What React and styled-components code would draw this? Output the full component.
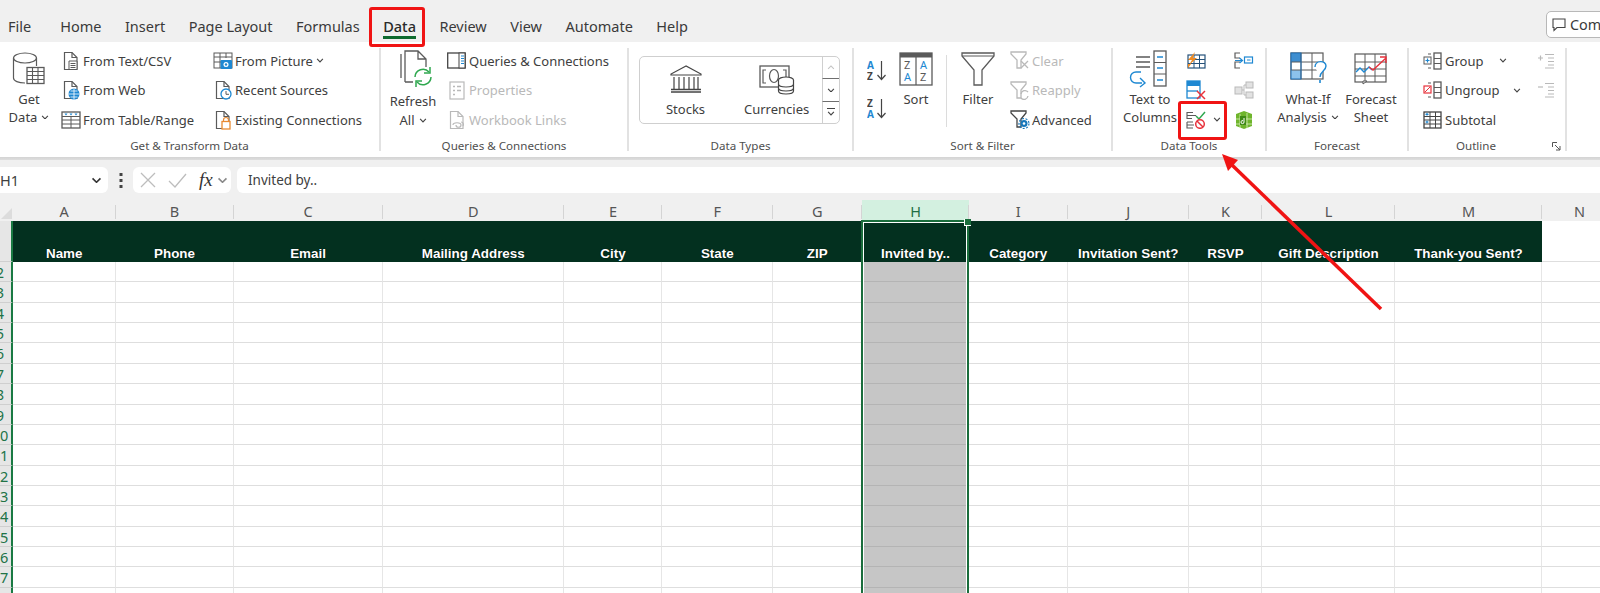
import React from 'react';
import styled, { createGlobalStyle } from 'styled-components';

const GRAY = '#5a5a5a';
const FADED = '#b9b9b9';
const BLUE = '#1e88d2';
const RED = '#e8323c';
const GREEN = '#2fa84f';

const Global = createGlobalStyle`
  html, body { margin: 0; padding: 0; height: 593px; overflow: hidden; background: #fff; }
  body { font-family: "Noto Sans", "Liberation Sans", sans-serif; color: #404040; }
`;

const Page = styled.div`
  position: relative;
  width: 1600px;
  height: 593px;
  overflow: hidden;
`;

/* tabs */
const TabBar = styled.div`
  height: 42px;
  background: #f0f0f0;
  display: flex;
  align-items: center;
  padding: 0 0 0 8px;
  gap: 23.5px;
  font-size: 14.5px;
  color: #3a3a3a;
`;
const Tab = styled.div`
  position: relative;
  line-height: 20px;
  margin-top: 9px;
  margin-right: ${p => p.$mr || 0}px;
  font-weight: ${p => (p.$active ? 500 : 400)};
  color: ${p => (p.$active ? '#2a2a2a' : '#3a3a3a')};
  ${p => p.$active && `
    &:after {
      content: '';
      position: absolute;
      left: 0; right: 0; bottom: -3px;
      height: 2.5px;
      background: #0e6b2e;
    }
  `}
`;
const CommentButton = styled.div`
  margin-left: auto;
  margin-right: -16px;
  margin-top: 7px;
  width: 70px;
  height: 27px;
  border: 1px solid #b8b8b8;
  border-radius: 5px;
  background: #fff;
  display: flex;
  align-items: center;
  gap: 4px;
  padding-left: 5px;
  font-size: 14.4px;
  box-sizing: border-box;
`;

/* ribbon */
const Ribbon = styled.div`
  height: 115px;
  background: #fff;
  padding-top: 6px;
  box-sizing: border-box;
  display: flex;
  align-items: flex-start;
`;
const Group = styled.div`
  width: ${p => p.$w}px;
  height: 103px;
  box-sizing: border-box;
  border-right: 2px solid #e2e2e2;
  display: flex;
  flex-direction: column;
`;
const GroupBody = styled.div`
  flex: 1;
  display: flex;
  padding-left: ${p => p.$pad || 0}px;
  gap: ${p => p.$gap || 0}px;
`;
const GroupLabel = styled.div`
  position: relative;
  height: 10px;
  line-height: 10px;
  font-size: 11.6px;
  color: #4f4f4f;
  text-align: center;
  padding-right: ${p => p.$pr || 0}px;
`;
const Launcher = styled.div`
  position: absolute;
  right: 4px;
  top: 1px;
  width: 9px;
  height: 9px;
  display: flex;
`;
const BigButton = styled.div`
  width: ${p => p.$w}px;
  flex: none;
  display: flex;
  flex-direction: column;
  align-items: center;
  font-size: 13px;
  line-height: ${p => p.$lh || 18}px;
  color: #404040;
`;
const BigIcon = styled.div`
  height: 42px;
  display: flex;
  align-items: center;
  justify-content: center;
  margin-bottom: ${p => p.$mb || 0}px;
  margin-left: ${p => p.$ml || 0}px;
`;
const ButtonLine = styled.div`
  display: flex;
  align-items: center;
  gap: 4px;
  white-space: nowrap;
`;
const SmallColumn = styled.div`
  width: ${p => (p.$w ? p.$w + 'px' : 'auto')};
  flex: none;
  margin-top: -2px;
  margin-left: ${p => p.$ml || 0}px;
`;
const SmallButton = styled.div`
  height: 29.5px;
  display: flex;
  align-items: center;
  gap: 2px;
  font-size: 13px;
  white-space: nowrap;
  color: ${p => (p.$off ? FADED : '#404040')};
`;
const IconSlot = styled.div`
  width: 21px;
  flex: none;
  display: flex;
  justify-content: center;
`;
const SortColumn = styled.div`
  width: 19px;
  flex: none;
  padding-top: 12px;
  display: flex;
  flex-direction: column;
  gap: 17px;
`;
const VSep = styled.div`
  width: 1px;
  height: 72px;
  margin-top: 7px;
  background: #dcdcdc;
  flex: none;
`;
const Gallery = styled.div`
  margin: 8px 0 0 10px;
  width: 201px;
  height: 68px;
  box-sizing: border-box;
  border: 1px solid #cfcfcf;
  border-radius: 5px;
  display: flex;
`;
const GalleryItem = styled.div`
  width: 91.5px;
  display: flex;
  flex-direction: column;
  align-items: center;
  font-size: 13px;
  line-height: 18px;
  padding-top: 8px;
  box-sizing: border-box;
  gap: 3px;
`;
const GalleryIcon = styled.div`
  height: 32px;
  display: flex;
  align-items: flex-start;
`;
const GalleryScroll = styled.div`
  margin-left: auto;
  width: 17px;
  display: flex;
  flex-direction: column;
`;
const ScrollStep = styled.div`
  flex: 1;
  display: flex;
  flex-direction: column;
  gap: 2px;
  align-items: center;
  justify-content: center;
  border-left: 1px solid #cfcfcf;
  border-top: ${p => (p.$first ? 'none' : '1px solid #6f6f6f')};
`;
const UpChev = styled.span`
  display: flex;
  transform: rotate(180deg);
`;
const MoreBar = styled.span`
  width: 8px;
  height: 1px;
  background: #444;
`;
const RibbonEdge = styled.div`
  height: 3px;
  background: linear-gradient(#d3d3d3, #dedede);
`;

/* formula bar */
const FormulaBar = styled.div`
  height: 40px;
  background: #f0f0f0;
  display: flex;
  align-items: center;
  box-sizing: border-box;
`;
const NameBox = styled.div`
  width: 108px;
  height: 26px;
  flex: none;
  background: #fff;
  border-radius: 0 6px 6px 0;
  display: flex;
  align-items: center;
  justify-content: space-between;
  padding-right: 6px;
  box-sizing: border-box;
  font-size: 14.5px;
`;
const Kebab = styled.div`
  width: 25px;
  flex: none;
  display: flex;
  justify-content: center;
`;
const FxBox = styled.div`
  width: 98px;
  height: 26px;
  flex: none;
  background: #fff;
  border-radius: 6px;
  display: flex;
  align-items: center;
  gap: 12px;
  padding-left: 7px;
  box-sizing: border-box;
`;
const FxText = styled.span`
  font-family: "Liberation Serif", serif;
  font-style: italic;
  font-size: 19px;
  color: #333;
  margin-right: -8px;
`;
const FormulaInput = styled.div`
  flex: 1;
  height: 26px;
  margin-left: 6px;
  background: #fff;
  border-radius: 6px 0 0 6px;
  padding-left: 11px;
  font-size: 13.5px;
  line-height: 26px;
`;

/* sheet */
const COLS = [
  { id: 'A', w: 102.5, title: 'Name' },
  { id: 'B', w: 118, title: 'Phone' },
  { id: 'C', w: 149, title: 'Email' },
  { id: 'D', w: 181.5, title: 'Mailing Address' },
  { id: 'E', w: 98, title: 'City' },
  { id: 'F', w: 110.5, title: 'State' },
  { id: 'G', w: 89.5, title: 'ZIP' },
  { id: 'H', w: 107, title: 'Invited by..' },
  { id: 'I', w: 98.5, title: 'Category' },
  { id: 'J', w: 121.5, title: 'Invitation Sent?' },
  { id: 'K', w: 73, title: 'RSVP' },
  { id: 'L', w: 133, title: 'Gift Description' },
  { id: 'M', w: 147, title: 'Thank-you Sent?' },
  { id: 'N', w: 75 },
];
const ROWS = [2, 3, 4, 5, 6, 7, 8, 9, 10, 11, 12, 13, 14, 15, 16, 17, 18];

const Sheet = styled.div`
  position: relative;
  display: grid;
  grid-template-columns: 13px ${COLS.map(c => c.w + 'px').join(' ')};
  grid-template-rows: 21px 41px repeat(${ROWS.length}, 20.37px);
`;
const Corner = styled.div`
  background: #f0f0f0;
  position: relative;
  &:after {
    content: '';
    position: absolute;
    right: 1px;
    bottom: 2px;
    border-style: solid;
    border-width: 0 0 11px 11px;
    border-color: transparent transparent #dcdcdc transparent;
  }
`;
const ColHead = styled.div`
  background: ${p => (p.$sel ? '#d3f0e0' : '#f0f0f0')};
  color: ${p => (p.$sel ? '#1f6e43' : '#555')};
  font-size: 14.5px;
  line-height: 23px;
  text-align: center;
  position: relative;
  &:after {
    content: '';
    position: absolute;
    right: 0;
    top: 5px;
    bottom: 2px;
    width: 1px;
    background: #d4d4d4;
  }
`;
const RowHead = styled.div`
  background: #e6e6e6;
  border-right: 2px solid #1a7a43;
  border-bottom: 1px solid #cfcfcf;
  box-sizing: border-box;
  overflow: hidden;
`;
const RowNumber = styled.span`
  display: block;
  width: 40px;
  margin-left: -20px;
  text-align: center;
  color: #217346;
  font-size: 14.5px;
  line-height: 20px;
`;
const TitleCell = styled.div`
  background: #03301f;
  color: #fff;
  font-family: "Liberation Sans", sans-serif;
  font-weight: 700;
  font-size: 13.4px;
  line-height: 16px;
  white-space: nowrap;
  display: flex;
  align-items: flex-end;
  justify-content: center;
  text-shadow: 0 0 1px #000;
`;
const Cell = styled.div`
  box-sizing: border-box;
  border-bottom: 1px solid ${p => (p.$sel ? '#b4b4b4' : '#dedede')};
  border-right: 1px solid ${p => (p.$sel ? '#c6c6c6' : '#e6e6e6')};
  background: ${p => (p.$sel ? '#c6c6c6' : '#fff')};
`;
const Selection = styled.div`
  position: absolute;
  left: 861px;
  top: 20px;
  bottom: 0;
  width: 108px;
  border: 2px solid #1a6d3c;
  outline: 1px solid #fff;
  outline-offset: -3px;
  box-sizing: border-box;
  &:after {
    content: '';
    position: absolute;
    right: -4px;
    top: -3px;
    width: 6px;
    height: 6px;
    background: #1a6d3c;
    border: 1px solid #fff;
    border-width: 0 0 1px 1px;
  }
`;

/* annotations */
const RedBox = styled.div`
  position: absolute;
  box-sizing: border-box;
  border: 3.5px solid #f01414;
  border-radius: 3px;
`;
const DataTabBox = styled(RedBox)`
  left: 369px;
  top: 6.5px;
  width: 56px;
  height: 40.5px;
`;
const ValidationBox = styled(RedBox)`
  left: 1178px;
  top: 101px;
  width: 49px;
  height: 39px;
`;
const ArrowLayer = styled.svg`
  position: absolute;
  left: 0;
  top: 0;
  pointer-events: none;
`;

const Glyph = styled.svg`
  display: block;
  flex: none;
`;

const Chev = ({ c = '#444', w = 8 }) => (
  <Glyph width={w} height={w * 0.6} viewBox="0 0 8 5" fill="none">
    <path d="M1 1l3 3 3-3" stroke={c} strokeWidth="1.2" />
  </Glyph>
);

const Sheet16 = ({ children, c = GRAY, off }) => (
  <Glyph width="20" height="20" viewBox="0 0 20 20" fill="none">
    <path d="M3.500 18.500V1.500H11l5 5V18.500z" stroke={off ? FADED : c} strokeWidth="1.2" fill="#fff" />
    <path d="M11 1.500V6.500H16" stroke={off ? FADED : c} strokeWidth="1.2" />
    {children}
  </Glyph>
);

const GetDataIcon = () => (
  <Glyph width="34" height="36" viewBox="0 0 34 36" fill="none">
    <ellipse cx="13" cy="7" rx="11.5" ry="5" fill="#fff" stroke={GRAY} strokeWidth="1.2" />
    <path d="M1.500 7v20c0 3 5 5 11.500 5" stroke={GRAY} strokeWidth="1.2" />
    <path d="M24.500 7v8" stroke={GRAY} strokeWidth="1.2" />
    <rect x="15" y="16.500" width="17" height="16" fill="#fff" stroke={GRAY} strokeWidth="1.3" />
    <path d="M15 20.500h17M15 24.500h17M15 28.500h17M20.500 16.500v16M26 16.500v16" stroke={GRAY} strokeWidth="1.1" />
  </Glyph>
);
const FromTextIcon = () => (
  <Sheet16>
    <path d="M8 10h8v8.500H8z" fill="#fff" stroke={GRAY} />
    <path d="M9.500 12.500h5M9.500 14.500h5M9.500 16.500h5" stroke={GRAY} />
  </Sheet16>
);
const FromWebIcon = () => (
  <Sheet16>
    <circle cx="13" cy="14" r="5.500" fill={BLUE} />
    <path d="M7.500 14h11M13 8.500v11M9.500 11h7M9.500 17h7" stroke="#fff" strokeWidth=".8" />
  </Sheet16>
);
const FromTableIcon = () => (
  <Glyph width="20" height="18" viewBox="0 0 20 18" fill="none">
    <rect x="1" y="1" width="18" height="16" fill="#fff" stroke={GRAY} strokeWidth="1.3" />
    <path d="M1 5.500h18M1 9h18M1 13h18M10 5.500V17" stroke={GRAY} />
    <path d="M3.500 2.500l1.500 2 1.500-2zM8.500 2.500l1.500 2 1.500-2zM13.500 2.500l1.500 2 1.500-2z" fill={BLUE} />
  </Glyph>
);
const FromPictureIcon = () => (
  <Glyph width="20" height="18" viewBox="0 0 20 18" fill="none">
    <rect x="1" y="1" width="18" height="15" fill="#fff" stroke={GRAY} />
    <path d="M1 5h18M1 10h8M7 1v15M13 1v5" stroke={GRAY} />
    <rect x="7.500" y="8" width="11.500" height="9" rx="1" fill={BLUE} />
    <circle cx="13" cy="12.500" r="2.500" fill="#fff" />
    <circle cx="13" cy="12.500" r="1.200" fill={BLUE} />
  </Glyph>
);
const RecentIcon = () => (
  <Sheet16>
    <circle cx="13" cy="14" r="5" fill="#fff" stroke={BLUE} strokeWidth="1.300" />
    <path d="M13 11v3.300h3" stroke={GRAY} />
  </Sheet16>
);
const ExistingIcon = () => (
  <Sheet16>
    <path d="M10.500 12V10a2.500 2.500 0 0 1 5 0v2" stroke="#e98a32" strokeWidth="1.200" />
    <rect x="9" y="11.500" width="8" height="7.500" fill="#fff" stroke="#e98a32" strokeWidth="1.300" />
  </Sheet16>
);
const RefreshIcon = () => (
  <Glyph width="34" height="38" viewBox="0 0 34 38" fill="none">
    <path d="M1 4v24" stroke={GRAY} strokeWidth="1.300" />
    <path d="M5 32V1h13l8 8v8M18 1v8h8M5 32h8" stroke={GRAY} strokeWidth="1.300" fill="#fff" />
    <path d="M15 27a8 8 0 0 1 14-5M31 27a8 8 0 0 1-14 5" stroke={GREEN} strokeWidth="1.500" />
    <path d="M30 17v6h-6M16 37v-6h6" stroke={GREEN} strokeWidth="1.500" />
  </Glyph>
);
const QueriesIcon = () => (
  <Glyph width="19" height="17" viewBox="0 0 19 17" fill="none">
    <rect x=".7" y="1" width="17.500" height="15" fill="#fff" stroke="#444" strokeWidth="1.300" />
    <rect x="12" y="1" width="6" height="15" fill="#fff" stroke="#444" strokeWidth="1" />
    <path d="M14 4h3M14 6.500h3M14 9h3M14 11.500h3" stroke={BLUE} strokeWidth="1.200" />
  </Glyph>
);
const PropertiesIcon = () => (
  <Glyph width="16" height="19" viewBox="0 0 16 19" fill="none">
    <rect x="1" y="1" width="14" height="17" stroke={FADED} strokeWidth="1.200" />
    <path d="M4 5.500h2M4 9.500h2M4 13.500h2M8 5.500h4M8 9.500h4" stroke={FADED} strokeWidth="1.500" />
  </Glyph>
);
const LinksIcon = () => (
  <Sheet16 off>
    <path d="M6 15c0-3 8-3 8 0s-5 3-5 0M14 12c2 0 3 2 2 4" stroke={FADED} strokeWidth="1.200" />
  </Sheet16>
);
const BankIcon = () => (
  <Glyph width="32" height="28" viewBox="0 0 32 28" fill="none">
    <path d="M16 1L1 9v1h30V9z" stroke="#444" strokeWidth="1.200" />
    <path d="M4 12v12M9 12v12M14 12v12M19 12v12M24 12v12M28 12v12" stroke="#444" strokeWidth="1.200" />
    <path d="M1 24.500h30M1 27h30" stroke="#444" strokeWidth="1.300" />
  </Glyph>
);
const CurrencyIcon = () => (
  <Glyph width="36" height="30" viewBox="0 0 36 30" fill="none">
    <rect x="1" y="1" width="29" height="21" stroke={GRAY} strokeWidth="1.300" />
    <path d="M7 5H4v13h3M24 5h3v13h-3" stroke={GRAY} strokeWidth="1.200" />
    <ellipse cx="15" cy="11" rx="4.500" ry="6.500" stroke={GRAY} strokeWidth="1.200" />
    <ellipse cx="27" cy="15" rx="7.500" ry="3" fill="#fff" stroke="#444" strokeWidth="1.200" />
    <path d="M19.500 15v11c0 4 15 4 15 0V15M19.500 19c0 4 15 4 15 0M19.500 23c0 4 15 4 15 0" fill="#fff" stroke="#444" strokeWidth="1.200" />
  </Glyph>
);
const SortPair = ({ top, bottom, topBlue }) => (
  <Glyph width="20" height="21" viewBox="0 0 20 21" fill="none">
    <text x="0" y="9" fontFamily="Noto Sans" fontWeight="700" fontSize="10" fill={topBlue ? BLUE : '#444'}>{top}</text>
    <text x="0" y="20" fontFamily="Noto Sans" fontWeight="700" fontSize="10" fill={topBlue ? '#444' : BLUE}>{bottom}</text>
    <path d="M14.500 1v18M10.500 15l4 4.500 4-4.500" stroke="#444" strokeWidth="1.200" />
  </Glyph>
);
const SortIcon = () => (
  <Glyph width="34" height="34" viewBox="0 0 34 34" fill="none">
    <rect x="1" y="1" width="32" height="32" stroke={GRAY} strokeWidth="1.300" />
    <rect x="1" y="1" width="32" height="4.500" fill={GRAY} />
    <path d="M17 5v28" stroke={GRAY} strokeWidth="1.200" />
    <text x="5" y="17" fontFamily="Noto Sans" fontSize="11" fill={GRAY}>Z</text>
    <text x="5" y="29" fontFamily="Noto Sans" fontSize="11" fill={BLUE}>A</text>
    <text x="21" y="17" fontFamily="Noto Sans" fontSize="11" fill={BLUE}>A</text>
    <text x="21" y="29" fontFamily="Noto Sans" fontSize="11" fill={GRAY}>Z</text>
  </Glyph>
);
const FilterIcon = () => (
  <Glyph width="34" height="34" viewBox="0 0 34 34" fill="none">
    <path d="M1 1h32v3L21 18v15h-8V18L1 4z" stroke={GRAY} strokeWidth="1.300" />
    <path d="M1 4h32" stroke={GRAY} strokeWidth="1" />
  </Glyph>
);
const SmallFunnel = ({ c, children }) => (
  <Glyph width="20" height="19" viewBox="0 0 20 19" fill="none">
    <path d="M1 1h15v2l-5 6v8H7V9L1 3z" stroke={c} strokeWidth="1.300" fill="#fff" />
    {children}
  </Glyph>
);
const ClearIcon = () => (
  <SmallFunnel c={FADED}>
    <path d="M11 10l7 7M18 10l-7 7" stroke={FADED} strokeWidth="1.300" />
  </SmallFunnel>
);
const ReapplyIcon = () => (
  <SmallFunnel c={FADED}>
    <path d="M11 13a4 4 0 0 1 7-2M18 15a4 4 0 0 1-7 2" stroke={FADED} strokeWidth="1.300" />
  </SmallFunnel>
);
const AdvancedIcon = () => (
  <SmallFunnel c="#444">
    <circle cx="14" cy="13.500" r="3.500" fill="#1777bb" />
    <circle cx="14" cy="13.500" r="5" stroke="#1777bb" strokeWidth="1.200" strokeDasharray="2 1.500" />
    <circle cx="14" cy="13.500" r="1.300" fill="#fff" />
  </SmallFunnel>
);
const TextColumnsIcon = () => (
  <Glyph width="38" height="38" viewBox="0 0 38 38" fill="none">
    <rect x="25" y="1" width="12" height="35" stroke={GRAY} strokeWidth="1.300" />
    <path d="M25 12.500h12M25 24h12" stroke={GRAY} strokeWidth="1.200" />
    <path d="M28 7h6M28 18h6M28 30h6" stroke={BLUE} strokeWidth="1.400" />
    <path d="M7 7h14M7 12h14M7 17h14" stroke={GRAY} strokeWidth="1.300" />
    <path d="M12 22H7a5 5 0 0 0 0 11h6" stroke={BLUE} strokeWidth="1.400" />
    <path d="M11 28l5 5-5 4" stroke={BLUE} strokeWidth="1.400" />
  </Glyph>
);
const FlashFillIcon = () => (
  <Glyph width="20" height="17" viewBox="0 0 20 17" fill="none">
    <rect x="2" y="3" width="17" height="13" stroke="#26527a" strokeWidth="1.200" />
    <path d="M2 7.500h17M2 11.500h17M8 3v13M13.500 3v13" stroke="#26527a" />
    <path d="M2 16l3-4H2zM9 0L2 8h4l-3 5 8-7H7z" fill="#ef8b22" />
  </Glyph>
);
const DuplicatesIcon = () => (
  <Glyph width="20" height="20" viewBox="0 0 20 20" fill="none">
    <rect x="1" y="1" width="13" height="17" stroke={BLUE} strokeWidth="1.300" fill="#fff" />
    <rect x="1" y="1" width="13" height="5" fill={BLUE} />
    <path d="M1 11h11" stroke={BLUE} strokeWidth="1.300" />
    <path d="M11 11l8 8M19 11l-8 8" stroke={RED} strokeWidth="1.500" />
  </Glyph>
);
const ValidationIcon = () => (
  <Glyph width="20" height="18" viewBox="0 0 20 18" fill="none">
    <path d="M1 4.500h9M1 4.500v-3h6M1 4.500v3h5" stroke={GRAY} strokeWidth="1.100" />
    <path d="M1 11v6h6M1 14h7M1 11h6" stroke={GRAY} strokeWidth="1.100" />
    <path d="M10 5l3 3 6-7" stroke={GREEN} strokeWidth="1.500" />
    <circle cx="14" cy="13" r="4.300" fill="#fff" stroke={RED} strokeWidth="1.500" />
    <path d="M11 10l6 6" stroke={RED} strokeWidth="1.500" />
  </Glyph>
);
const ConsolidateIcon = () => (
  <Glyph width="20" height="17" viewBox="0 0 20 17" fill="none">
    <path d="M6 1H1v5h5M6 10H1v6h5" stroke={GRAY} strokeWidth="1.200" />
    <path d="M1 8.500h7M5.500 6l3 2.500-3 2.500" stroke={BLUE} strokeWidth="1.200" />
    <rect x="10.500" y="5" width="8" height="6" stroke={BLUE} strokeWidth="1.200" />
    <path d="M13 8h3.500" stroke={BLUE} />
  </Glyph>
);
const RelationsIcon = () => (
  <Glyph width="20" height="18" viewBox="0 0 20 18" fill="none">
    <rect x="1" y="6" width="7" height="7" fill="#e2e2e2" stroke={FADED} />
    <rect x="12" y="1" width="7" height="6" fill="#e2e2e2" stroke={FADED} />
    <rect x="12" y="11" width="7" height="6" fill="#e2e2e2" stroke={FADED} />
    <path d="M8 9h2M10 4v10M10 4h2M10 14h2" stroke={FADED} />
  </Glyph>
);
const PowerIcon = () => (
  <Glyph width="20" height="20" viewBox="0 0 20 20" fill="none">
    <path d="M10 1l8 3v12l-8 3-8-3V4z" fill="#6fb52c" />
    <path d="M2 9h16M6 4v14M13 3v15M2 14h16" stroke="#d8efbe" strokeWidth=".8" />
    <rect x="6" y="6" width="6" height="9" fill="#3f8a15" />
    <path d="M10 8v4a1.500 1.500 0 1 1-1-1.300" stroke="#fff" strokeWidth="1" />
  </Glyph>
);
const WhatIfIcon = () => (
  <Glyph width="37" height="34" viewBox="0 0 37 34" fill="none">
    <rect x="1" y="1" width="32" height="26" fill="#fff" stroke={GRAY} strokeWidth="1.200" />
    <rect x="1" y="1" width="10" height="9" fill="#3e8ed0" />
    <rect x="1" y="18" width="10" height="9" fill="#8cc2ec" />
    <path d="M1 10h32M1 18h32M11 1v26M22 1v26" stroke={GRAY} />
    <rect x="1" y="1" width="10" height="26" stroke="#1e6fb4" />
    <path d="M25 15c0-7 11-7 11-1 0 5-6 5-6 11" fill="#fff" stroke={BLUE} strokeWidth="1.400" />
    <path d="M30 28v3" stroke={BLUE} strokeWidth="1.600" />
  </Glyph>
);
const ForecastIcon = () => (
  <Glyph width="34" height="32" viewBox="0 0 34 32" fill="none">
    <rect x="1" y="1" width="31" height="28" stroke={GRAY} strokeWidth="1.200" />
    <path d="M1 9h31M1 16h31M1 23h31M11 1v28M21 1v28" stroke={GRAY} />
    <path d="M2 19l4-4 4 4 5-5 3 3" stroke={BLUE} strokeWidth="1.400" fill="#fff" />
    <path d="M15 14l4 3 13-12M26 4h6v6" stroke={RED} strokeWidth="1.400" />
    <path d="M9 31l4-3H9z" stroke={GRAY} fill="#fff" />
  </Glyph>
);
const OutlineTable = ({ children }) => (
  <Glyph width="19" height="18" viewBox="0 0 19 18" fill="none">
    <rect x="11" y="1" width="7" height="16" fill="#fff" stroke={GRAY} strokeWidth="1.300" />
    <path d="M11 6.500h7M11 11.500h7" stroke={GRAY} />
    <path d="M8 2H5M8 16H5" stroke={GRAY} strokeWidth="1.200" />
    {children}
  </Glyph>
);
const GroupIcon = () => (
  <OutlineTable>
    <rect x="1" y="5" width="7" height="7" fill="#fff" stroke={GRAY} />
    <path d="M2.500 8.500h4M4.500 6.500v4" stroke={BLUE} strokeWidth="1.200" />
  </OutlineTable>
);
const UngroupIcon = () => (
  <OutlineTable>
    <rect x="1" y="5" width="7" height="7" fill="#fff" stroke={RED} strokeWidth="1.200" />
    <path d="M2 11l5-5" stroke={RED} />
  </OutlineTable>
);
const SubtotalIcon = () => (
  <Glyph width="19" height="18" viewBox="0 0 19 18" fill="none">
    <rect x="1" y="1" width="17" height="16" stroke="#444" strokeWidth="1.300" />
    <path d="M1 5.500h17M1 9h17M1 13h17M7 1v16M12.500 1v16" stroke="#444" />
    <path d="M2.500 3.300h3M4 2v2.600M2.500 11h3M4 9.700v2.600" stroke={BLUE} strokeWidth="1.200" />
  </Glyph>
);
const ShowDetailIcon = ({ plus }) => (
  <Glyph width="18" height="16" viewBox="0 0 18 16" fill="none">
    <path d={plus ? 'M1 5h5M3.500 2.500v5' : 'M1 5h5'} stroke={FADED} strokeWidth="1.200" />
    <path d="M8 1.500h9M11 5h6M11 8.500h6M11 12h6M8 15h9" stroke={FADED} strokeWidth="1.100" />
  </Glyph>
);
const CommentIcon = () => (
  <Glyph width="14" height="14" viewBox="0 0 14 14" fill="none">
    <path d="M1 1h12v8.500H5l-3 3v-3H1z" stroke="#444" strokeWidth="1.100" />
  </Glyph>
);
const LauncherIcon = () => (
  <Glyph width="9" height="9" viewBox="0 0 9 9" fill="none">
    <path d="M5 .5H.5V5M3 3l5 5M8 4v4H4" stroke="#555" />
  </Glyph>
);
const CrossIcon = () => (
  <Glyph width="16" height="16" viewBox="0 0 16 16" fill="none">
    <path d="M1 1l14 14M15 1L1 15" stroke="#bdbdbd" strokeWidth="1.300" />
  </Glyph>
);
const TickIcon = () => (
  <Glyph width="19" height="15" viewBox="0 0 19 15" fill="none">
    <path d="M1 8l6 6L18 1" stroke="#bdbdbd" strokeWidth="1.300" />
  </Glyph>
);
const KebabIcon = () => (
  <Glyph width="4" height="15" viewBox="0 0 4 15" fill="#444">
    <rect x=".5" y="0" width="3" height="3" />
    <rect x=".5" y="6" width="3" height="3" />
    <rect x=".5" y="12" width="3" height="3" />
  </Glyph>
);

const TABS = ['Home', 'Insert', 'Page Layout', 'Formulas', 'Data', 'Review', 'View', 'Automate', 'Help'];

const Small = ({ icon, label, off, children }) => (
  <SmallButton $off={off}>
    <IconSlot>{icon}</IconSlot>
    {label}
    {children}
  </SmallButton>
);

const Big = ({ w, icon, lines, lh, mb, ml }) => (
  <BigButton $w={w} $lh={lh}>
    <BigIcon $mb={mb} $ml={ml}>{icon}</BigIcon>
    {lines}
  </BigButton>
);

const GapChev = styled.span`
  margin-left: ${p => p.$ml || 4}px;
  display: inline-flex;
`;

const App = () => (
  <Page>
    <Global />
    <TabBar>
      <Tab $mr={5.5}>File</Tab>
      {TABS.map(name => (
        <Tab key={name} $active={name === 'Data'}>{name}</Tab>
      ))}
      <CommentButton><CommentIcon />Com</CommentButton>
    </TabBar>

    <Ribbon>
      <Group $w={381}>
        <GroupBody $pad={4} $gap={6}>
          <Big w={50} icon={<GetDataIcon />} lines={<>
            <ButtonLine>Get</ButtonLine>
            <ButtonLine>Data <Chev /></ButtonLine>
          </>} />
          <SmallColumn $w={152}>
            <Small icon={<FromTextIcon />} label="From Text/CSV" />
            <Small icon={<FromWebIcon />} label="From Web" />
            <Small icon={<FromTableIcon />} label="From Table/Range" />
          </SmallColumn>
          <SmallColumn $ml={-6}>
            <Small icon={<FromPictureIcon />} label="From Picture"><GapChev $ml={1}><Chev /></GapChev></Small>
            <Small icon={<RecentIcon />} label="Recent Sources" />
            <Small icon={<ExistingIcon />} label="Existing Connections" />
          </SmallColumn>
        </GroupBody>
        <GroupLabel>Get &amp; Transform Data</GroupLabel>
      </Group>

      <Group $w={248}>
        <GroupBody $gap={1}>
          <Big w={64} lh={19} mb={2} ml={8} icon={<RefreshIcon />} lines={<>
            <ButtonLine>Refresh</ButtonLine>
            <ButtonLine>All <Chev /></ButtonLine>
          </>} />
          <SmallColumn>
            <Small icon={<QueriesIcon />} label="Queries & Connections" />
            <Small off icon={<PropertiesIcon />} label="Properties" />
            <Small off icon={<LinksIcon />} label="Workbook Links" />
          </SmallColumn>
        </GroupBody>
        <GroupLabel>Queries &amp; Connections</GroupLabel>
      </Group>

      <Group $w={225}>
        <GroupBody>
          <Gallery>
            <GalleryItem><GalleryIcon><BankIcon /></GalleryIcon>Stocks</GalleryItem>
            <GalleryItem><GalleryIcon><CurrencyIcon /></GalleryIcon>Currencies</GalleryItem>
            <GalleryScroll>
              <ScrollStep $first><UpChev><Chev c="#c4c4c4" /></UpChev></ScrollStep>
              <ScrollStep><Chev /></ScrollStep>
              <ScrollStep><MoreBar /><Chev /></ScrollStep>
            </GalleryScroll>
          </Gallery>
        </GroupBody>
        <GroupLabel>Data Types</GroupLabel>
      </Group>

      <Group $w={259}>
        <GroupBody $pad={13} $gap={5}>
          <SortColumn>
            <SortPair top="A" bottom="Z" topBlue />
            <SortPair top="Z" bottom="A" />
          </SortColumn>
          <Big w={50} icon={<SortIcon />} lines={<ButtonLine>Sort</ButtonLine>} />
          <VSep />
          <Big w={52} icon={<FilterIcon />} lines={<ButtonLine>Filter</ButtonLine>} />
          <SmallColumn>
            <Small off icon={<ClearIcon />} label="Clear" />
            <Small off icon={<ReapplyIcon />} label="Reapply" />
            <Small icon={<AdvancedIcon />} label="Advanced" />
          </SmallColumn>
        </GroupBody>
        <GroupLabel>Sort &amp; Filter</GroupLabel>
      </Group>

      <Group $w={154}>
        <GroupBody $pad={2}>
          <Big w={70} ml={-4} icon={<TextColumnsIcon />} lines={<>
            <ButtonLine>Text to</ButtonLine>
            <ButtonLine>Columns</ButtonLine>
          </>} />
          <SmallColumn $w={48}>
            <Small icon={<FlashFillIcon />} />
            <Small icon={<DuplicatesIcon />} />
            <Small icon={<ValidationIcon />}><GapChev $ml={5}><Chev /></GapChev></Small>
          </SmallColumn>
          <SmallColumn>
            <Small icon={<ConsolidateIcon />} />
            <Small icon={<RelationsIcon />} />
            <Small icon={<PowerIcon />} />
          </SmallColumn>
        </GroupBody>
        <GroupLabel>Data Tools</GroupLabel>
      </Group>

      <Group $w={142}>
        <GroupBody $pad={4}>
          <Big w={74} icon={<WhatIfIcon />} lines={<>
            <ButtonLine>What-If</ButtonLine>
            <ButtonLine>Analysis <Chev /></ButtonLine>
          </>} />
          <Big w={52} icon={<ForecastIcon />} lines={<>
            <ButtonLine>Forecast</ButtonLine>
            <ButtonLine>Sheet</ButtonLine>
          </>} />
        </GroupBody>
        <GroupLabel>Forecast</GroupLabel>
      </Group>

      <Group $w={158}>
        <GroupBody $pad={13}>
          <SmallColumn $w={113}>
            <Small icon={<GroupIcon />} label="Group"><GapChev $ml={14}><Chev /></GapChev></Small>
            <Small icon={<UngroupIcon />} label="Ungroup"><GapChev $ml={11}><Chev /></GapChev></Small>
            <Small icon={<SubtotalIcon />} label="Subtotal" />
          </SmallColumn>
          <SmallColumn>
            <Small icon={<ShowDetailIcon plus />} />
            <Small icon={<ShowDetailIcon />} />
          </SmallColumn>
        </GroupBody>
        <GroupLabel $pr={22}>
          Outline
          <Launcher><LauncherIcon /></Launcher>
        </GroupLabel>
      </Group>
    </Ribbon>
    <RibbonEdge />

    <FormulaBar>
      <NameBox>H1<Chev c="#333" w={11} /></NameBox>
      <Kebab><KebabIcon /></Kebab>
      <FxBox>
        <CrossIcon />
        <TickIcon />
        <FxText>fx</FxText>
        <Chev c="#888" w={11} />
      </FxBox>
      <FormulaInput>Invited by..</FormulaInput>
    </FormulaBar>

    <Sheet>
      <Corner />
      {COLS.map(c => <ColHead key={c.id} $sel={c.id === 'H'}>{c.id}</ColHead>)}
      <RowHead />
      {COLS.map(c => (c.title
        ? <TitleCell key={c.id}>{c.title}</TitleCell>
        : <Cell key={c.id} />))}
      {ROWS.map(r => (
        <React.Fragment key={r}>
          <RowHead><RowNumber>{r}</RowNumber></RowHead>
          {COLS.map(c => <Cell key={c.id} $sel={c.id === 'H'} />)}
        </React.Fragment>
      ))}
      <Selection />
    </Sheet>

    <DataTabBox />
    <ValidationBox />
    <ArrowLayer width="1600" height="593" viewBox="0 0 1600 593" fill="none">
      <path d="M1381 309L1232 165" stroke="#f01414" strokeWidth="3.5" />
      <path d="M1222 154l16 6-10 11z" fill="#f01414" />
    </ArrowLayer>
  </Page>
);

export default App;
